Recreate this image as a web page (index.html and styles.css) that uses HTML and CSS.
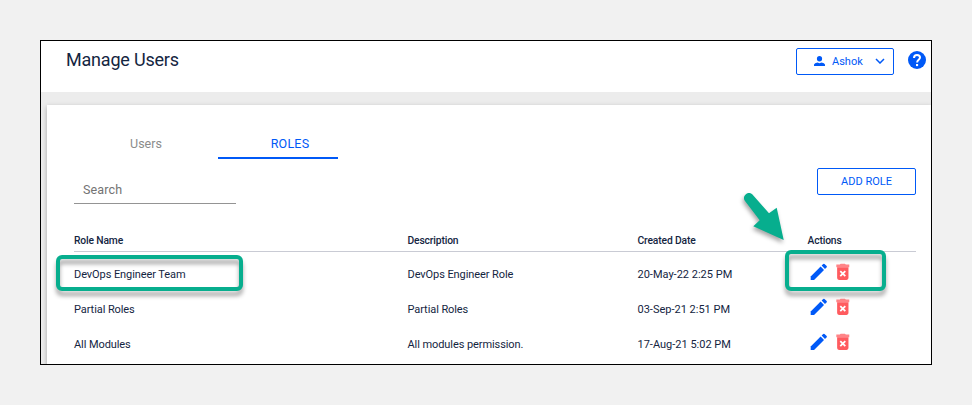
FILE: index.html
```html
<!DOCTYPE html>
<html lang="en">
<head>
<meta charset="utf-8">
<title>Manage Users</title>
<link rel="stylesheet" href="styles.css">
</head>
<body>
<svg class="defs" aria-hidden="true">
  <symbol id="edit" viewBox="0 0 24 24"><path d="M3 17.25V21h3.75L17.81 9.94l-3.75-3.75L3 17.25z"/><path d="M20.71 7.04a1 1 0 0 0 0-1.41l-2.34-2.34a1 1 0 0 0-1.41 0l-1.83 1.83 3.75 3.75z"/></symbol>
  <symbol id="trash" viewBox="0 0 24 24"><path opacity=".75" d="M4.8 4h3.8l1-1h4.8l1 1h3.8v3H4.8z"/><path d="M5.7 7h12.6v12a2 2 0 0 1-2 2H7.7a2 2 0 0 1-2-2z"/><path d="M9.2 11.2l5.6 5.6m0-5.6l-5.6 5.6" stroke="#fff" stroke-width="2"/></symbol>
</svg>
<div class="frame">
  <header class="topbar">
    <h1 class="title"><span>Manage Users</span></h1>
    <button class="btn user">
      <svg class="person" viewBox="0 0 11 10"><ellipse cx="5.5" cy="2.7" rx="2.6" ry="2.7"/><path d="M0 10V8.4Q.5 7 3.5 6.4l2 .8 2-.8q3 .6 3.5 2V10z"/></svg>
      <span class="user-name">Ashok</span>
      <svg class="chevron" viewBox="0 0 10 6"><path d="M1 1l4 4 4-4"/></svg>
    </button>
    <svg class="help" viewBox="0 0 18 18"><circle cx="9" cy="9" r="9"/><path d="M6 7.1Q6 3.9 9 3.9t3 2.7c0 2.2-2.9 2.3-2.9 4.9"/><rect x="8" y="13" width="2.1" height="2.1"/></svg>
  </header>
  <main class="content">
    <section class="card">
      <nav class="tabs">
        <a class="tab"><span>Users</span></a>
        <a class="tab active"><span>ROLES</span></a>
      </nav>
      <div class="toolbar">
        <div class="search"><span>Search</span></div>
        <button class="btn add"><span>ADD ROLE</span></button>
      </div>
      <div class="table">
        <div class="row head"><span>Role Name</span><span>Description</span><span>Created Date</span><span>Actions</span></div>
        <div class="row"><span>DevOps Engineer Team</span><span>DevOps Engineer Role</span><span class="date">20-May-22 2:25 PM</span><span class="actions"><svg class="edit"><use href="#edit"/></svg><svg class="trash"><use href="#trash"/></svg></span></div>
        <div class="row"><span>Partial Roles</span><span>Partial Roles</span><span class="date">03-Sep-21 2:51 PM</span><span class="actions"><svg class="edit"><use href="#edit"/></svg><svg class="trash"><use href="#trash"/></svg></span></div>
        <div class="row"><span>All Modules</span><span>All modules permission.</span><span class="date">17-Aug-21 5:02 PM</span><span class="actions"><svg class="edit"><use href="#edit"/></svg><svg class="trash"><use href="#trash"/></svg></span></div>
      </div>
    </section>
  </main>
</div>
<div class="mark mark-name"></div>
<div class="mark mark-actions"></div>
<svg class="arrow" viewBox="0 0 50 56"><path d="M12.2 4.2L29 23.3l7.7-5.6 7 32.3-30.4-13.7 6.4-6L5 11a5 5 0 0 1 7.2-6.8z"/></svg>
</body>
</html>
```

FILE: styles.css
```css
* { box-sizing: border-box; }
body {
  margin: 0;
  padding: 40px;
  height: 405px;
  overflow: hidden;
  background: #f1f1f1;
  color: #14253f;
  font-family: Roboto, "Liberation Sans", sans-serif;
  font-size: 11px;
}
.defs { position: absolute; width: 0; height: 0; }
.frame {
  display: flex;
  flex-direction: column;
  width: 892px;
  height: 325px;
  border: 1px solid #000;
  background: #fff;
  overflow: hidden;
}
.topbar {
  display: flex;
  flex: none;
  height: 51px;
  padding: 7px 5px 0 25px;
}
.title {
  flex: 1;
  margin: 0;
  font-size: 18px;
  font-weight: 400;
  line-height: 24px;
  letter-spacing: -.2px;
}
.btn {
  display: flex;
  align-items: center;
  height: 27px;
  padding: 0;
  border: 1px solid #0059f7;
  border-radius: 2px;
  background: #fff;
  color: #0059f7;
  font: 11px/14px Roboto, sans-serif;
}
.user { width: 98px; padding: 0 8px 0 17px; }
.person { width: 11px; height: 10px; margin-top: -1px; fill: #0059f7; }
.user-name { margin-left: 7px; letter-spacing: 0; }
.chevron { width: 10px; height: 6px; margin: -1px 0 0 auto; fill: none; stroke: #0059f7; stroke-width: 1.5; }
.help { width: 18px; height: 18px; margin: 3px 0 0 14px; fill: #0059f7; }
.help path { fill: none; stroke: #fff; stroke-width: 2; }
.help rect { fill: #fff; }
.content { flex: 1; padding: 13px 0 0 6px; background: #ececec; }
.card {
  height: 280px;
  padding: 24px 15px 0 27px;
  background: #fff;
  box-shadow: 0 2px 5px rgba(0, 0, 0, .3);
}
.tabs { display: flex; }
.tab {
  width: 144px;
  height: 30px;
  text-align: center;
  font-size: 12.5px;
  line-height: 30px;
  color: #8b8b8b;
}
.tab.active { width: 120px; padding-left: 24px; color: #0059f7; border-bottom: 2px solid #0059f7; letter-spacing: .2px; }
.toolbar { display: flex; justify-content: space-between; height: 67px; padding-top: 9px; }
.search {
  width: 162px;
  height: 36px;
  padding: 14px 0 0 9px;
  border-bottom: 1px solid #949494;
  color: #737373;
  font-size: 12.5px;
  line-height: 16px;
  letter-spacing: .15px;
}
.add { justify-content: center; width: 99px; }
.row {
  display: grid;
  grid-template-columns: 333.5px 230px 170px 1fr;
  align-items: center;
  height: 35px;
  padding-top: 2px;
  line-height: 14px;
  letter-spacing: -.08px;
}
.date { letter-spacing: 0; }
.head { height: 26px; padding-top: 4px; border-bottom: 1px solid #c9cbd4; font-weight: 500; font-size: 10.3px; margin-bottom: 4px; letter-spacing: -.15px; }
.actions { display: flex; height: 22px; margin-top: -6px; }
.actions svg { width: 21.6px; height: 21.6px; }
.edit { fill: #0059f7; }
.trash { margin-left: 3px; fill: #ff5b5f; }
.mark {
  position: absolute;
  border: 4px solid #07ae8e;
  border-radius: 6px;
  filter: drop-shadow(0 5px 2px rgba(0, 0, 0, .35));
}
.mark-name { left: 56px; top: 255px; width: 187px; height: 36px; }
.mark-actions { left: 785px; top: 250px; width: 101px; height: 41px; }
.arrow {
  position: absolute;
  left: 740px;
  top: 190px;
  width: 50px;
  height: 56px;
  overflow: visible;
  fill: #07ae8e;
  filter: drop-shadow(-1px 3px 2px rgba(0, 0, 0, .35));
}
```
